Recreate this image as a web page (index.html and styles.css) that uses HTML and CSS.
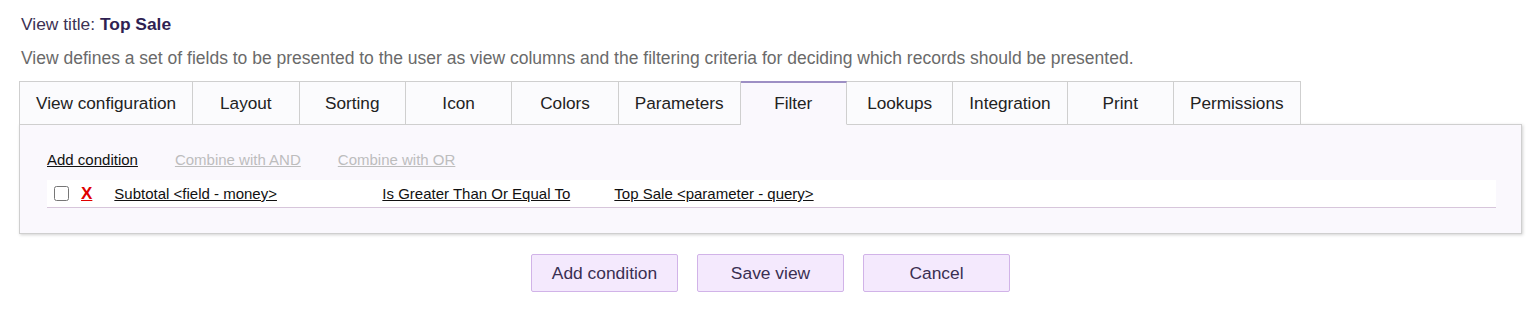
FILE: index.html
```html
<!DOCTYPE html>
<html lang="en">
<head>
  <meta charset="UTF-8">
  <title>Edit view</title>
  <link rel="stylesheet" href="styles.css">
</head>
<body>

  <!-- Header -->
  <div class="view-title">View title: <b>Top Sale</b></div>
  <p class="view-desc">View defines a set of fields to be presented to the user as view columns and the filtering criteria for deciding which records should be presented.</p>

  <!-- Tabs -->
  <ul class="tabs">
    <li class="tab">View configuration</li>
    <li class="tab">Layout</li>
    <li class="tab">Sorting</li>
    <li class="tab">Icon</li>
    <li class="tab">Colors</li>
    <li class="tab">Parameters</li>
    <li class="tab active">Filter</li>
    <li class="tab">Lookups</li>
    <li class="tab">Integration</li>
    <li class="tab">Print</li>
    <li class="tab">Permissions</li>
  </ul>

  <!-- Filter panel -->
  <div class="panel">
    <div class="panel-links">
      <a href="#">Add condition</a>
      <a href="#" class="disabled">Combine with AND</a>
      <a href="#" class="disabled">Combine with OR</a>
    </div>
    <div class="condition">
      <input type="checkbox" class="cond-check">
      <a href="#" class="cond-remove">X</a>
      <a href="#" class="cond-field">Subtotal &lt;field - money&gt;</a>
      <a href="#" class="cond-op">Is Greater Than Or Equal To</a>
      <a href="#" class="cond-value">Top Sale &lt;parameter - query&gt;</a>
    </div>
  </div>

  <!-- Buttons -->
  <div class="actions">
    <button class="btn">Add condition</button>
    <button class="btn">Save view</button>
    <button class="btn">Cancel</button>
  </div>

</body>
</html>
```

FILE: styles.css
```css
body {
  font-family: "Liberation Sans", Arial, sans-serif;
  background-color: #fff;
  margin: 0;
  padding: 13px 12px 0 19px;
}

.view-title {
  color: #3c3254;
  font-size: 17.4px;
  padding-left: 2px;
  line-height: 22px;
}

.view-title b {
  color: #2f1f52;
}

.view-desc {
  color: #6a6a6a;
  font-size: 17.5px;
  margin: 13px 0 13px 2px;
  line-height: 20px;
}

.tabs {
  display: flex;
  list-style: none;
  margin: 0;
  padding: 0;
  position: relative;
  z-index: 1;
}

.tab {
  min-width: 73.4px;
  padding: 0 16px;
  height: 42px;
  line-height: 42px;
  text-align: center;
  font-size: 17.2px;
  color: #222;
  background-color: #fbfbfd;
  border: 1px solid #cfcfcf;
  border-left: none;
  border-bottom: 1px solid #cfcfcf;
}

.tab:first-child {
  border-left: 1px solid #cfcfcf;
}

.tab.active {
  background-color: #faf8fd;
  border-top: 2px solid #9d8fc4;
  height: 41px;
  line-height: 41px;
  border-bottom-color: #faf8fd;
}

.panel {
  margin-top: -1px;
  background-color: #faf8fd;
  border: 1px solid #cfcfcf;
  box-shadow: 1px 1px 3px rgba(0, 0, 0, 0.18);
  padding: 26px 25px 25px 27px;
}

.panel-links {
  display: flex;
  gap: 37px;
  font-size: 15px;
  line-height: 18px;
}

.panel-links a {
  color: #111;
}

.panel-links a.disabled {
  color: #bdbdbd;
}

.condition {
  display: flex;
  align-items: center;
  margin-top: 11px;
  height: 27px;
  background-color: #fff;
  border-bottom: 1px solid #d7c6db;
  font-size: 15px;
}

.condition a {
  color: #111;
}

.cond-check {
  width: 15px;
  height: 15px;
  margin: 0 0 0 7px;
}

.cond-remove {
  margin-left: 12px;
  font-weight: bold;
  font-size: 17px;
  color: #e00000 !important;
}

.cond-field {
  margin-left: 22px;
  width: 268px;
}

.cond-op {
  width: 232px;
}

.actions {
  display: flex;
  justify-content: center;
  gap: 19px;
  margin: 20px 0 0 0;
}

.btn {
  font-family: "Liberation Sans", Arial, sans-serif;
  font-size: 17.4px;
  color: #3a2f52;
  background-color: #f4e9fd;
  border: 1px solid #d1b3e8;
  border-radius: 2px;
  width: 147px;
  height: 38px;
  cursor: pointer;
}
```
